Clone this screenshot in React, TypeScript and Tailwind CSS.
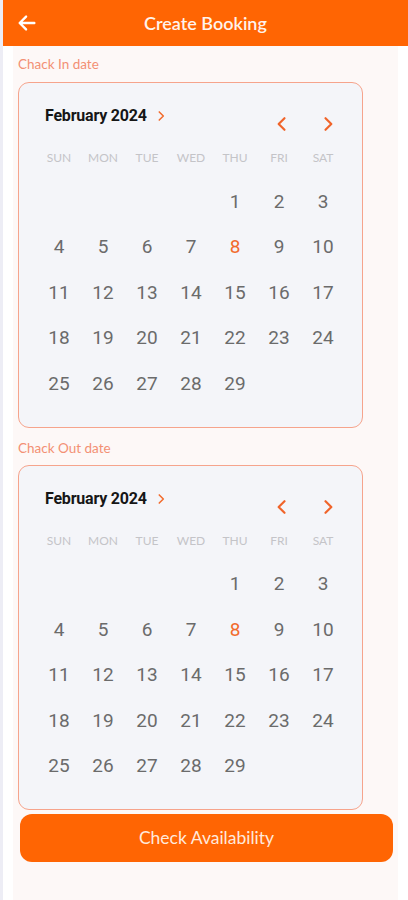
import React from 'react';

const WEEK = ['SUN', 'MON', 'TUE', 'WED', 'THU', 'FRI', 'SAT'];
// Feb 2024 starts on Thursday
const DAYS: (number | null)[] = [null, null, null, null, ...Array.from({ length: 29 }, (_, i) => i + 1)];

const Chevron = ({ dir, className }: { dir: 'left' | 'right'; className?: string }) => (
    <svg viewBox="0 0 24 24" className={className} fill="none" stroke="currentColor" strokeWidth={2.6} strokeLinecap="round" strokeLinejoin="round">
        {dir === 'left' ? <path d="M15 5l-7 7 7 7" /> : <path d="M9 5l7 7-7 7" />}
    </svg>
);

const Calendar = () => (
    <div className="w-[345px] rounded-[11px] border border-[#f6a48c] bg-[#f4f5f9] pl-[18px] pr-[17px] pt-[23px] pb-[20px]">
        {/* month header */}
        <div className="flex h-[28px] items-start">
            <div className="flex items-center pl-[8px]">
                <span className="text-[16px] leading-5 font-bold text-[#161616] tracking-[-0.2px]" style={{ fontFamily: 'Roboto, sans-serif' }}>
                    February 2024
                </span>
                <Chevron dir="right" className="ml-[7px] h-[14px] w-[14px] text-[#f26b2c]" />
            </div>
            <div className="ml-auto mt-[8px] flex items-center gap-[26px] pr-[7px]">
                <Chevron dir="left" className="h-[20px] w-[20px] text-[#f0642a]" />
                <Chevron dir="right" className="h-[20px] w-[20px] text-[#f0642a]" />
            </div>
        </div>

        {/* weekdays */}
        <div className="mt-[16px] grid grid-cols-7">
            {WEEK.map((d) => (
                <div key={d} className="text-center text-[12px] leading-4 text-[#c4c4c8]" style={{ fontFamily: 'Lato, sans-serif' }}>
                    {d}
                </div>
            ))}
        </div>

        {/* days */}
        <div className="mt-[13px] grid grid-cols-7 auto-rows-[45.5px]">
            {DAYS.map((d, i) => (
                <div
                    key={i}
                    className={`flex items-center justify-center text-[19px] ${d === 8 ? 'text-[#f26b2c]' : 'text-[#6b6b6b]'}`}
                    style={{ fontFamily: 'Roboto, sans-serif' }}
                >
                    {d ?? ''}
                </div>
            ))}
        </div>
    </div>
);

export default function App() {
    return (
        <div className="flex min-h-[900px] w-[408px] bg-white" style={{ fontFamily: 'Lato, sans-serif' }}>
            <div className="w-[3px] shrink-0 bg-[#ededf5]" />
            <div className="flex flex-1 flex-col">
                {/* HEADER */}
                <div className="relative flex h-[46px] items-center justify-center bg-[#ff6503]">
                    <svg viewBox="0 0 24 24" className="absolute left-[13px] top-[12px] h-[22px] w-[22px] text-white" fill="none" stroke="currentColor" strokeWidth={2.6} strokeLinecap="round" strokeLinejoin="round">
                        <path d="M20 12H5M11 5l-7 7 7 7" />
                    </svg>
                    <span className="text-[18px] font-semibold text-[#fff3ec]">Create Booking</span>
                </div>

                {/* CONTENT */}
                <div className="mx-[10px] flex flex-1 flex-col bg-[#fdf8f7] pl-[5px] pb-[40px]">
                    <div className="mt-[10px] text-[13.5px] leading-[16px] text-[#f39074]">Chack In date</div>
                    <div className="mt-[10px]">
                        <Calendar />
                    </div>

                    <div className="mt-[12px] text-[13.5px] leading-[16px] text-[#f39074]">Chack Out date</div>
                    <div className="mt-[9px]">
                        <Calendar />
                    </div>

                    <button className="ml-[2px] mt-[4px] h-[48px] w-[373px] rounded-[12px] bg-[#ff6503] text-[17.5px] text-[#ffe9dc]">
                        Check Availability
                    </button>
                </div>
            </div>
        </div>
    );
}
